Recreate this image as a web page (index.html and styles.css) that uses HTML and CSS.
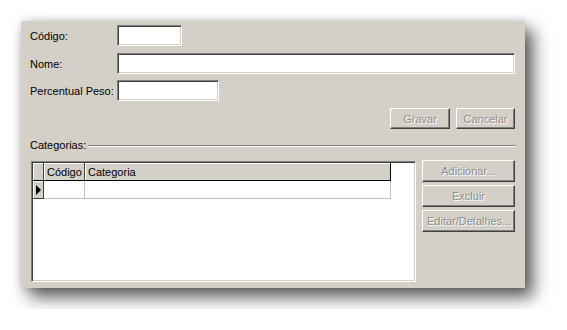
FILE: index.html
```html
<!DOCTYPE html>
<html lang="pt-BR">
<head>
  <meta charset="UTF-8">
  <title>Cadastro</title>
  <link rel="stylesheet" href="styles.css">
</head>
<body>
  <div class="janela">
    <div class="campo campo-1">
      <label>Código:</label>
      <input type="text" class="caixa caixa-codigo">
    </div>
    <div class="campo campo-2">
      <label>Nome:</label>
      <input type="text" class="caixa caixa-nome">
    </div>
    <div class="campo campo-3">
      <label>Percentual Peso:</label>
      <input type="text" class="caixa caixa-peso">
    </div>

    <div class="acoes">
      <button class="botao botao-gravar" disabled>Gravar</button>
      <button class="botao botao-cancelar" disabled>Cancelar</button>
    </div>

    <div class="separador">
      <span>Categorias:</span>
      <div class="linha"></div>
    </div>

    <div class="area">
      <div class="grade">
        <table>
          <thead>
            <tr>
              <th class="ind"></th>
              <th class="cod">Código</th>
              <th class="cat">Categoria</th>
            </tr>
          </thead>
          <tbody>
            <tr>
              <td class="ind"><span class="seta"></span></td>
              <td class="cod"></td>
              <td class="cat"></td>
            </tr>
          </tbody>
        </table>
      </div>
      <div class="lateral">
        <button class="botao" disabled>Adicionar...</button>
        <button class="botao" disabled>Excluir</button>
        <button class="botao" disabled>Editar/Detalhes...</button>
      </div>
    </div>
  </div>
</body>
</html>
```

FILE: styles.css
```css
body {
  margin: 0;
  padding: 21px;
  background-color: #ffffff;
  font-family: "Liberation Sans", Arial, sans-serif;
  font-size: 11px;
  color: #000000;
}
.janela {
  width: 504px;
  height: 267px;
  box-sizing: border-box;
  padding: 4px 10px 6px 9px;
  background-color: #d4d0c8;
  box-shadow: 8px 9px 16px rgba(0, 0, 0, 0.65), 0 0 8px rgba(0, 0, 0, 0.15);
}
.campo {
  display: flex;
  align-items: center;
  height: 21px;
}
.campo-2 {
  margin-top: 7px;
}
.campo-3 {
  margin-top: 6px;
}
.campo label {
  width: 87px;
  padding-top: 1px;
}
.caixa {
  box-sizing: border-box;
  height: 21px;
  margin: 0;
  padding: 2px 3px;
  font: inherit;
  background-color: #ffffff;
  border-style: solid;
  border-width: 1px;
  border-color: #808080 #ffffff #ffffff #808080;
  box-shadow: inset 1px 1px #404040, inset -1px -1px #d4d0c8;
  outline: none;
}
.caixa-codigo {
  width: 65px;
}
.caixa-nome {
  width: 399px;
}
.caixa-peso {
  width: 102px;
}
.botao {
  box-sizing: border-box;
  height: 21px;
  margin: 0;
  padding: 0 4px;
  font: inherit;
  color: #8e8c88;
  text-shadow: 1px 1px #ffffff;
  background-color: #d4d0c8;
  border-style: solid;
  border-width: 1px;
  border-color: #ffffff #404040 #404040 #ffffff;
  box-shadow: inset -1px -1px #808080;
}
.acoes {
  display: flex;
  justify-content: flex-end;
  gap: 6px;
  margin-top: 7px;
}
.botao-gravar {
  width: 60px;
}
.botao-cancelar {
  width: 59px;
}
.separador {
  display: flex;
  align-items: center;
  gap: 2px;
  margin-top: 9px;
  height: 14px;
}
.separador .linha {
  flex: 1;
  border-top: 1px solid #808080;
  border-bottom: 1px solid #ffffff;
  margin-top: 2px;
}
.area {
  display: flex;
  gap: 6px;
  margin-top: 8px;
  padding-left: 1px;
}
.grade {
  width: 385px;
  height: 121px;
  margin-top: 1px;
  box-sizing: border-box;
  padding: 1px;
  background-color: #ffffff;
  border-style: solid;
  border-width: 1px;
  border-color: #808080 #ffffff #ffffff #808080;
  box-shadow: inset 1px 1px #404040, inset -1px -1px #d4d0c8;
}
.grade table {
  border-collapse: separate;
  border-spacing: 0;
  font: inherit;
}
.grade th {
  height: 17px;
  padding: 0 0 0 3px;
  text-align: left;
  font-weight: normal;
  background-color: #d4d0c8;
  border-right: 1px solid #404040;
  border-bottom: 1px solid #000000;
  box-shadow: inset 1px 1px #ffffff;
}
.grade th.cat {
  border-right-color: #000000;
}
.grade td {
  height: 17px;
  padding: 0;
  border-right: 1px solid #c0c0c0;
  border-bottom: 1px solid #c0c0c0;
}
.grade .ind {
  width: 10px;
  padding: 0;
}
.grade td.ind {
  background-color: #d4d0c8;
  border-right: 1px solid #404040;
  border-bottom: 1px solid #404040;
  box-shadow: inset 1px 1px #ffffff;
}
.grade .cod {
  width: 37px;
}
.grade .cat {
  width: 302px;
}
.seta {
  display: block;
  width: 0;
  height: 0;
  margin-left: 3px;
  border-left: 5px solid #000000;
  border-top: 5px solid transparent;
  border-bottom: 5px solid transparent;
}
.lateral {
  display: flex;
  flex-direction: column;
  gap: 3px;
  width: 93px;
}
.lateral .botao {
  height: 22px;
  width: 93px;
}
```
